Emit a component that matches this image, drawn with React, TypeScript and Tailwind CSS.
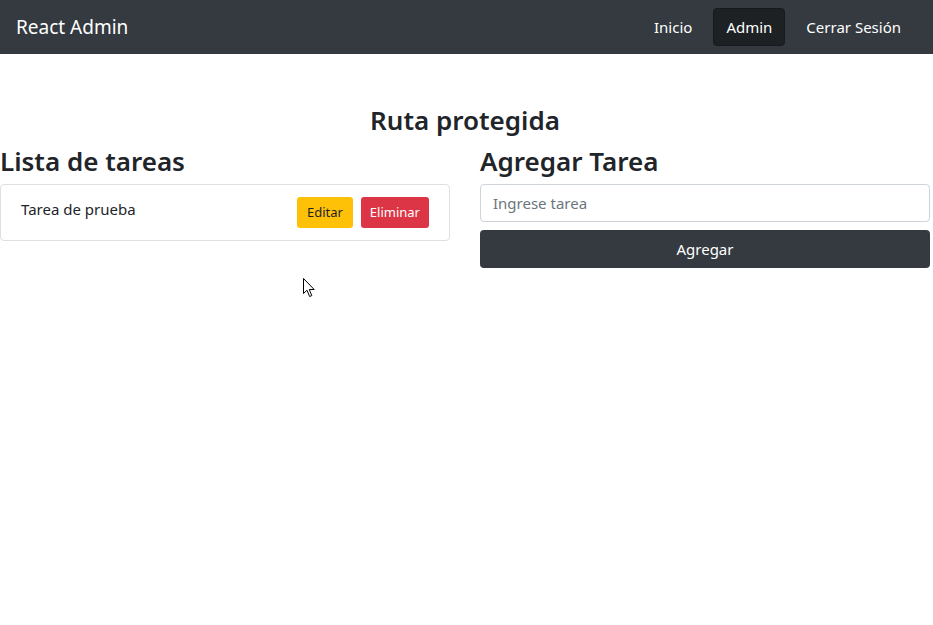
import { useState } from 'react';

export default function App() {
  const [tareas] = useState([{ id: 1, nombre: 'Tarea de prueba' }]);

  return (
    <div className="min-h-[625px] bg-white text-[#212529] font-['Noto_Sans',sans-serif] relative">
      <nav className="bg-[#343a40] h-[54px]">
        <div className="w-[930px] h-full flex items-center justify-between px-4">
          <span className="text-white text-[19px] leading-[30px]">React Admin</span>
          <div className="flex gap-2 text-[15px]">
            <a className="px-3 py-[6px] leading-6 text-white border border-[#343a40] rounded">Inicio</a>
            <a className="px-3 py-[6px] leading-6 text-white bg-[#1d2124] border border-[#171a1d] rounded">Admin</a>
            <a className="px-3 py-[6px] leading-6 text-white border border-[#343a40] rounded">Cerrar Sesión</a>
          </div>
        </div>
      </nav>

      <main className="w-[930px] pt-[50px]">
        <h3 className="text-center text-[26px] font-semibold leading-[33px] mb-2">Ruta protegida</h3>
        <div className="grid grid-cols-2 gap-[30px]">
          <div>
            <h3 className="text-[26px] font-semibold leading-[33px] mb-[6px]">Lista de tareas</h3>
            <ul>
              {tareas.map((t) => (
                <li key={t.id} className="border border-[#dfdfdf] rounded px-5 py-3 flex justify-between items-start">
                  <span className="leading-6 text-[15px]">{t.nombre}</span>
                  <div className="flex gap-2">
                    <button className="bg-[#ffc107] text-[#212529] text-[13px] px-[10px] h-[31px] rounded-[3px]">Editar</button>
                    <button className="bg-[#dc3545] text-white text-[13px] px-[9px] h-[31px] rounded-[3px]">Eliminar</button>
                  </div>
                </li>
              ))}
            </ul>
          </div>
          <div>
            <h3 className="text-[26px] font-semibold leading-[33px] mb-[6px]">Agregar Tarea</h3>
            <input
              className="w-full h-[38px] border border-[#ced4da] rounded px-3 text-[15px] placeholder:text-[#6c757d] outline-none"
              placeholder="Ingrese tarea"
            />
            <button className="w-full h-[38px] mt-2 bg-[#343a40] text-white text-[15px] rounded">Agregar</button>
          </div>
        </div>
      </main>

      <svg className="absolute left-[303px] top-[278px]" width="13" height="20" viewBox="0 0 13 20">
        <path d="M0.5 0.5 L0.5 15.5 L4 12.2 L6.6 18.5 L8.8 17.6 L6.3 11.5 L11.2 11.5 Z" fill="white" stroke="black" strokeWidth="1" strokeLinejoin="round" />
      </svg>
    </div>
  );
}
